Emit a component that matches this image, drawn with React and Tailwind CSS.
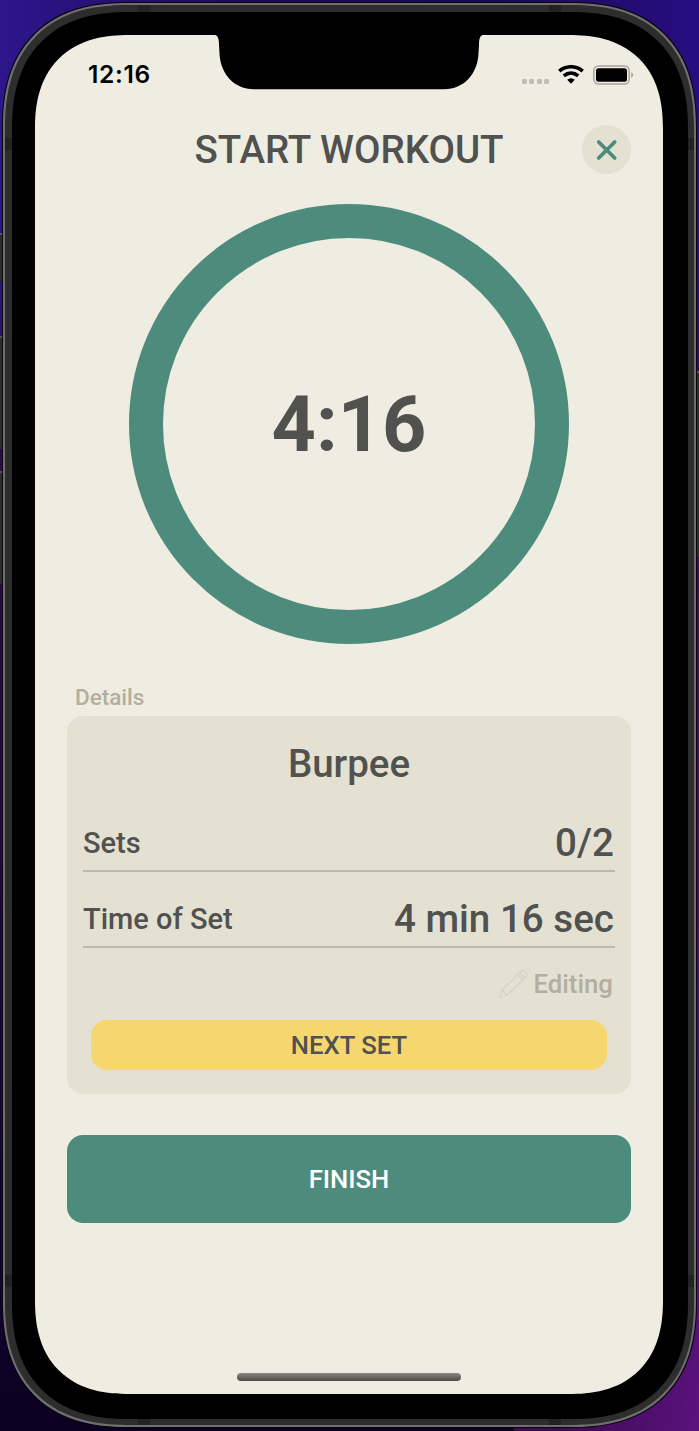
import React from "react";

function StatusBar() {
  return (
    <div className="relative flex h-[79px] shrink-0 items-center justify-between pl-[53px] pr-[29px]">
      <span className="font-[Inter,sans-serif] text-[24.5px] leading-none font-semibold tracking-[0.7px] text-black">12:16</span>
      <svg className="absolute left-[180px] top-0 h-[55px] w-[268px]" viewBox="0 0 268 55" aria-hidden="true">
        <path d="M0 0C3 .4 4 4 4 10L4.6 20C6 39 19 54.2 39 54.2H229C249 54.2 262 39 263.4 20L264 10C264 4 265 .4 268 0Z" fill="#000" />
      </svg>
      <div className="flex items-center">
        <div className="mr-[9px] flex gap-[2.5px] pt-[13px]">
          {[0, 1, 2, 3].map((i) => (
            <i key={i} className="size-[5px] rounded-[1.5px] bg-[#bfbdb5]" />
          ))}
        </div>
        <svg width="26" height="19" viewBox="0 0 26 19" className="mr-[9px]" fill="none" aria-hidden="true">
          <path d="M1.3 6.2C8 .3 18 .3 24.7 6.2" stroke="#000" strokeWidth="3.6" />
          <path d="M5.8 10.9C10.2 7.1 15.8 7.1 20.2 10.9" stroke="#000" strokeWidth="3.6" />
          <path d="M9.2 14.8Q13 11.8 16.8 14.8L13 18.8Z" fill="#000" />
        </svg>
        <svg width="41" height="20" viewBox="0 0 41 20" aria-hidden="true">
          <rect x=".8" y="1" width="35.4" height="18" rx="4.7" fill="none" stroke="#a6a49e" strokeWidth="1.5" />
          <rect x="3" y="3.3" width="31" height="13.4" rx="2.5" fill="#000" />
          <path d="M38.2 7.2Q40.1 7.8 40.1 10Q40.1 12.2 38.2 12.8Z" fill="#a6a49e" />
        </svg>
      </div>
    </div>
  );
}

function DetailRow({ label, value }) {
  return (
    <div className="flex h-[76px] items-center justify-between border-b-2 border-[#bdbaab] pt-[20px]">
      <span className="text-[29px] leading-none">{label}</span>
      <span className="pr-px text-[38.6px] leading-none">{value}</span>
    </div>
  );
}

function Pencil() {
  return (
    <svg width="30" height="30" viewBox="0 0 30 30" fill="none" stroke="#d6d3c5" strokeWidth="1.3" strokeLinejoin="round" aria-hidden="true">
      <path d="M1.5 28.5L4 21.2L22.4 2.9C25.6-.2 31 4.9 27.7 8.2L9.2 26ZM4 21.2L9.2 26M19.6 5.7L24.9 11M21.6 3.8L26.9 9.1" />
    </svg>
  );
}

function Screen() {
  return (
    <main className="flex h-[1359px] w-[628px] flex-col overflow-hidden rounded-[94px] bg-[#efede1] font-[Roboto,sans-serif] font-medium text-[#515150] [corner-shape:superellipse(1.25)]">
      <StatusBar />
      <div className="flex flex-col px-8">
        <header className="mt-[11px] grid h-[49px] grid-cols-[49px_1fr_49px] items-center">
          <span />
          <h1 className="pt-[2px] text-center text-[38.5px] leading-none whitespace-nowrap">START WORKOUT</h1>
          <button className="flex size-[49px] items-center justify-center rounded-full bg-[#e4e1d2]" aria-label="Close">
            <svg width="22" height="22" viewBox="0 0 22 22" stroke="#4d8c7c" strokeWidth="3.8" strokeLinecap="round" aria-hidden="true">
              <path d="M2.7 3L18.7 19M18.7 3L2.7 19" />
            </svg>
          </button>
        </header>
        <div className="mt-[30px] flex size-[440px] items-center justify-center self-center rounded-full border-[34px] border-[#4d8c7c]">
          <span className="pt-[2px] text-[77.3px] leading-none font-bold">4:16</span>
        </div>
        <h2 className="mt-[39px] h-[33px] pl-2 text-[22.5px] leading-[28px] text-[#b2af9f]">Details</h2>
        <section className="flex h-[378px] flex-col rounded-2xl bg-[#e4e1d2] px-4">
          <h3 className="pt-[28px] text-center text-[38.5px] leading-[39px]">Burpee</h3>
          <div className="mt-[13px]">
            <DetailRow label="Sets" value="0/2" />
            <DetailRow label="Time of Set" value="4 min 16 sec" />
          </div>
          <div className="mt-[20px] flex h-[32px] items-center justify-end gap-[5px] pr-[2px] text-[25.8px] leading-none text-[#b2af9f]">
            <Pencil />
            <span className="pt-[2px]">Editing</span>
          </div>
          <button className="mx-2 mt-[20px] h-[50px] rounded-2xl bg-[#f6d76f] pt-[2px] text-[25.7px] leading-none">NEXT SET</button>
        </section>
        <button className="mt-[41px] h-[88px] rounded-2xl bg-[#4d8c7c] pt-[2px] text-[25.7px] leading-none text-white">FINISH</button>
      </div>
      <div className="mt-auto mb-[13px] h-[8px] w-[224px] self-center rounded-full bg-linear-to-b from-[#8b8a84] to-[#4b4a46]" />
    </main>
  );
}

export default function App() {
  return (
    <div className="relative flex h-[1431px] w-[699px] overflow-hidden bg-[linear-gradient(90deg,#2d158b_0%,#1d0b55_35%,#1a0a50_70%,#280d82_100%)] pt-[3px] pl-[3px]">
      <div className="absolute inset-x-0 top-0 h-full bg-[linear-gradient(180deg,transparent_15%,#280b42_34%,#1e083c_60%,#12022e_90%,#0b0120_100%)]" />
      <div className="absolute right-0 bottom-0 h-[900px] w-[185px] bg-[linear-gradient(to_bottom_right,#240943,#420c5a_70%,#5b127e)]" />
      <i className="absolute top-[233px] left-0 h-[48px] w-[4px] border-t-2 border-[#555] bg-[#2d2d2d]" />
      <i className="absolute top-[336px] left-0 h-[113px] w-[4px] border-t-2 border-[#555] bg-[#2d2d2d]" />
      <i className="absolute top-[471px] left-0 h-[113px] w-[4px] border-t-2 border-[#555] bg-[#2d2d2d]" />
      <i className="absolute top-[371px] right-0 h-[186px] w-[4px] border-t-2 border-[#555] bg-[#2d2d2d]" />
      <div className="relative h-[1424px] w-[693px] shrink-0 overflow-hidden rounded-[125px] border-2 border-[#6f6f70] bg-[#2d2d2d] p-[7px] shadow-[0_0_0_1px_#08050c] [corner-shape:superellipse(1.25)]">
        <i className="absolute top-0 left-[133px] h-[8px] w-[12px] bg-[#222]" />
        <i className="absolute top-0 right-[133px] h-[8px] w-[12px] bg-[#222]" />
        <i className="absolute bottom-0 left-[133px] h-[8px] w-[12px] bg-[#222]" />
        <i className="absolute bottom-0 right-[133px] h-[8px] w-[12px] bg-[#222]" />
        <i className="absolute top-[133px] left-0 h-[12px] w-[8px] bg-[#222]" />
        <i className="absolute top-[133px] right-0 h-[12px] w-[8px] bg-[#222]" />
        <i className="absolute bottom-[138px] left-0 h-[12px] w-[8px] bg-[#222]" />
        <i className="absolute right-0 bottom-[138px] h-[12px] w-[8px] bg-[#222]" />
        <div className="relative h-[1407px] w-[676px] rounded-[117px] bg-black pt-[23px] pl-[23px] [corner-shape:superellipse(1.25)]">
          <Screen />
        </div>
      </div>
    </div>
  );
}
